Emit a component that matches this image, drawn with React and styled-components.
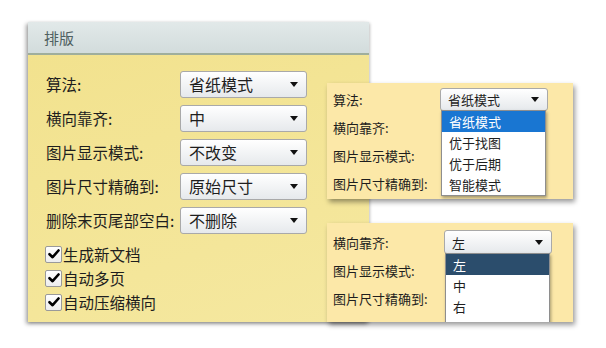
import styled, { createGlobalStyle } from "styled-components"

const GlobalStyle = createGlobalStyle`
    body {
        margin: 0;
        background: #FFFFFF;
        font-family: "Liberation Sans", "Noto Sans CJK SC", sans-serif;
    }
`

const mainRows = [
    { label: '算法:', value: '省纸模式' },
    { label: '横向靠齐:', value: '中' },
    { label: '图片显示模式:', value: '不改变' },
    { label: '图片尺寸精确到:', value: '原始尺寸' },
    { label: '删除末页尾部空白:', value: '不删除' },
]

const checks = ['生成新文档', '自动多页', '自动压缩横向']

function Arrow() {
    return (
        <svg width="8" height="5" viewBox="0 0 8 5">
            <path d="M0 0 L8 0 L4 5 Z" fill="#111" />
        </svg>
    )
}

function Check() {
    return (
        <svg width="12" height="10" viewBox="0 0 12 10">
            <path d="M1.5 5.2 L4.6 8.2 L10.5 1.5" stroke="#000" strokeWidth="2.6" fill="none" strokeLinecap="round" strokeLinejoin="round" />
        </svg>
    )
}

export default function App() {
    return (
        <>
            <GlobalStyle />
            <Stage>
                <Panel>
                    <Header>排版</Header>
                    <Body>
                        {mainRows.map((r) => (
                            <Row key={r.label}>
                                <Label>{r.label}</Label>
                                <Select>
                                    <span>{r.value}</span>
                                    <Arrow />
                                </Select>
                            </Row>
                        ))}
                        <Checks>
                            {checks.map((c) => (
                                <CheckRow key={c}>
                                    <Box><Check /></Box>
                                    {c}
                                </CheckRow>
                            ))}
                        </Checks>
                    </Body>
                </Panel>
                <Popups>
                    <Popup pad="2px 0 2px 6px">
                        <PopRow>
                            <PopLabel>算法:</PopLabel>
                            <SmallSelect left={107}>
                                <span>省纸模式</span>
                                <Arrow />
                                <List>
                                    <Item active="#1976D2">省纸模式</Item>
                                    <Item>优于找图</Item>
                                    <Item>优于后期</Item>
                                    <Item>智能模式</Item>
                                </List>
                            </SmallSelect>
                        </PopRow>
                        <PopRow><PopLabel>横向靠齐:</PopLabel></PopRow>
                        <PopRow><PopLabel>图片显示模式:</PopLabel></PopRow>
                        <PopRow><PopLabel>图片尺寸精确到:</PopLabel></PopRow>
                    </Popup>
                    <Popup pad="5px 0 10px 6px" clip>
                        <PopRow>
                            <PopLabel>横向靠齐:</PopLabel>
                            <SmallSelect left={111} tall>
                                <span>左</span>
                                <Arrow />
                                <List>
                                    <Item active="#2B4D6C">左</Item>
                                    <Item>中</Item>
                                    <Item>右</Item>
                                    <Item />
                                </List>
                            </SmallSelect>
                        </PopRow>
                        <PopRow><PopLabel>图片显示模式:</PopLabel></PopRow>
                        <PopRow><PopLabel>图片尺寸精确到:</PopLabel></PopRow>
                    </Popup>
                </Popups>
            </Stage>
        </>
    )
}

const Stage = styled.div`
    display: flex;
    align-items: flex-start;
    width: 606px;
    height: 348px;
    padding: 22px 0 0 28px;
    box-sizing: border-box;
    overflow: hidden;
`
const Panel = styled.div`
    width: 341px;
    height: 300px;
    display: flex;
    flex-direction: column;
    box-shadow: -2px 2px 4px rgba(0, 0, 0, 0.35), 1px 1px 3px rgba(0, 0, 0, 0.2);
    flex-shrink: 0;
`
const Header = styled.div`
    height: 31px;
    background: linear-gradient(#E2E9E9, #D2DCDC);
    border-bottom: 2px solid #9FAE9C;
    color: #4F6062;
    font-family: "Noto Sans CJK SC", sans-serif;
    font-size: 15px;
    display: flex;
    align-items: center;
    padding-left: 16px;
`
const Body = styled.div`
    flex: 1;
    background: linear-gradient(160deg, #F2E28E, #F5E8A0);
    padding: 12px 0 0 18px;
`
const Row = styled.div`
    display: grid;
    grid-template-columns: 134px 127px;
    align-items: center;
    height: 34px;
`
const Label = styled.div`
    font-family: "Noto Sans CJK SC", sans-serif;
    font-size: 15.5px;
    color: #1E1E1E;
    white-space: nowrap;
`
const Select = styled.div`
    height: 27px;
    box-sizing: border-box;
    border: 1px solid #A9A9A9;
    border-radius: 3px;
    background: linear-gradient(#FFFFFF, #E6E9EC);
    display: flex;
    align-items: center;
    justify-content: space-between;
    padding: 0 8px 0 8px;
    font-family: "Noto Sans CJK SC", sans-serif;
    font-size: 16px;
    color: #1E1E1E;
`
const Checks = styled.div`
    margin-top: 5px;
    display: flex;
    flex-direction: column;
`
const CheckRow = styled.div`
    height: 24px;
    display: flex;
    align-items: center;
    font-family: "Noto Sans CJK SC", sans-serif;
    font-size: 15.5px;
    color: #1E1E1E;
`
const Box = styled.div`
    width: 15px;
    height: 15px;
    border: 1px solid #9A9A9A;
    border-radius: 2px;
    background: linear-gradient(#FFFFFF, #EDEDED);
    display: flex;
    align-items: center;
    justify-content: center;
    margin-right: 1px;
    margin-left: -1px;
`
const Popups = styled.div`
    display: flex;
    flex-direction: column;
    gap: 24px;
    margin-left: -42px;
    padding-top: 61px;
`
const Popup = styled.div`
    width: 246px;
    box-sizing: border-box;
    background: #FCE8A8;
    padding: ${props => props.pad};
    box-shadow: 2px 3px 5px rgba(0, 0, 0, 0.4);
    overflow: ${props => props.clip ? 'hidden' : 'visible'};
    position: relative;
`
const PopRow = styled.div`
    height: 28px;
    display: flex;
    align-items: center;
    position: relative;
`
const PopLabel = styled.div`
    font-family: "Noto Sans CJK SC", sans-serif;
    font-size: 13px;
    color: #1E1E1E;
    white-space: nowrap;
`
const SmallSelect = styled.div`
    position: absolute;
    left: ${props => props.left}px;
    width: 108px;
    height: ${props => props.tall ? 24 : 23}px;
    box-sizing: border-box;
    border: 1px solid #A9A9A9;
    border-radius: 3px;
    background: linear-gradient(#FFFFFF, #E6E9EC);
    display: flex;
    align-items: center;
    justify-content: space-between;
    padding: 0 8px 0 7px;
    font-family: "Noto Sans CJK SC", sans-serif;
    font-size: 13px;
    color: #1E1E1E;
`
const List = styled.div`
    position: absolute;
    top: 100%;
    left: 0;
    width: 105px;
    background: #FFFFFF;
    border: 1px solid #8E8E8E;
    box-sizing: border-box;
    box-shadow: 1px 2px 3px rgba(0, 0, 0, 0.35);
`
const Item = styled.div`
    height: 21px;
    display: flex;
    align-items: center;
    padding-left: 7px;
    font-size: 13px;
    color: ${props => props.active ? '#FFFFFF' : '#1E1E1E'};
    background: ${props => props.active || '#FFFFFF'};
`
